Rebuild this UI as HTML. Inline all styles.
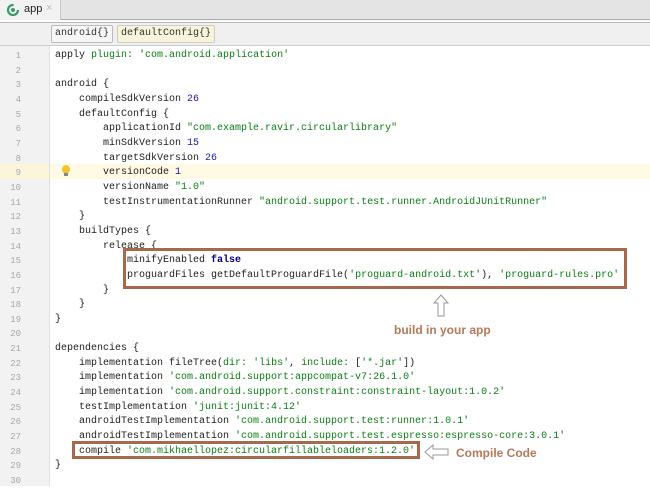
<!DOCTYPE html>
<html><head><style>
body{margin:0;width:650px;height:486px;overflow:hidden;background:#fff;font-family:"Liberation Mono",monospace;position:relative}
.tabbar{position:absolute;left:0;top:0;width:650px;height:19px;background:#e4e4e4;border-bottom:1px solid #aaa}
.tab{position:absolute;left:0;top:0;width:60px;height:20px;background:#f2f2f2;border-right:1px solid #ccc;font-family:"Liberation Sans",sans-serif;font-size:11px;color:#222}
.crumbs{position:absolute;left:0;top:22px;width:650px;height:22px;background:#f0f0f0;border-top:1px solid #bbb;border-bottom:1px solid #ccc}
.crumb{position:absolute;top:2px;height:16px;border:1px solid #bbb;border-radius:2px;font-size:10px;line-height:16px;padding:0 3px;color:#333;background:#f6f6f6}
.gutter{position:absolute;left:0;top:46px;width:49px;height:440px;background:#f2f2f2;border-right:1px solid #e0e0e0}
.hl{position:absolute;left:50px;top:164px;width:600px;height:14.6px;background:#fffae3}
.hlg{position:absolute;left:0;top:164px;width:49px;height:14.6px;background:#fbf5dc}
.nums{position:absolute;left:0;top:49px;width:21px;text-align:right;font-size:9px;line-height:14.65px;color:#a8a8a8}
pre{position:absolute;left:55px;top:49px;margin:0;font-family:"Liberation Mono",monospace;font-size:10px;line-height:14.65px;color:#222}
.s{color:#0a7f14}.n{color:#1a1aa6}.k{color:#000080;font-weight:bold}
.box{position:absolute;border:3px solid #a6694d}
.lbl{position:absolute;font-family:"Liberation Sans",sans-serif;font-weight:bold;font-size:12px;color:#b8785a}
</style></head><body>
<div class="tabbar"></div>
<div class="tab"><svg width="14" height="14" style="position:absolute;left:6px;top:3px"><circle cx="7" cy="7" r="5" fill="none" stroke="#3d9a6a" stroke-width="2.2" stroke-dasharray="24 8"/><circle cx="7" cy="7" r="2" fill="#3d9a6a"/></svg><span style="position:absolute;left:24px;top:3px">app</span><span style="position:absolute;left:46px;top:2px;color:#bbb">×</span></div>
<div class="crumbs">
<div class="crumb" style="left:51px">android{}</div>
<div class="crumb" style="left:117px;background:#f8f4dc;border-color:#ccc">defaultConfig{}</div>
</div>
<div class="gutter"></div>
<div class="hlg"></div><div class="hl"></div>
<div style="position:absolute;left:62px;top:165px;width:8px;height:9px;border-radius:50%;background:#f2c230"></div>
<div style="position:absolute;left:64px;top:173px;width:4px;height:3px;background:#888"></div>
<div class="nums">1<br>2<br>3<br>4<br>5<br>6<br>7<br>8<br>9<br>10<br>11<br>12<br>13<br>14<br>15<br>16<br>17<br>18<br>19<br>20<br>21<br>22<br>23<br>24<br>25<br>26<br>27<br>28<br>29<br>30</div>
<pre>apply <span class="s">plugin:</span> <span class="s">'com.android.application'</span>

android {
    compileSdkVersion <span class="n">26</span>
    defaultConfig {
        applicationId <span class="s">"com.example.ravir.circularlibrary"</span>
        minSdkVersion <span class="n">15</span>
        targetSdkVersion <span class="n">26</span>
        versionCode <span class="n">1</span>
        versionName <span class="s">"1.0"</span>
        testInstrumentationRunner <span class="s">"android.support.test.runner.AndroidJUnitRunner"</span>
    }
    buildTypes {
        release {
            minifyEnabled <span class="k">false</span>
            proguardFiles getDefaultProguardFile(<span class="s">'proguard-android.txt'</span>), <span class="s">'proguard-rules.pro'</span>
        }
    }
}

dependencies {
    implementation fileTree(<span class="s">dir:</span> <span class="s">'libs'</span>, <span class="s">include:</span> [<span class="s">'*.jar'</span>])
    implementation <span class="s">'com.android.support:appcompat-v7:26.1.0'</span>
    implementation <span class="s">'com.android.support.constraint:constraint-layout:1.0.2'</span>
    testImplementation <span class="s">'junit:junit:4.12'</span>
    androidTestImplementation <span class="s">'com.android.support.test:runner:1.0.1'</span>
    androidTestImplementation <span class="s">'com.android.support.test.espresso:espresso-core:3.0.1'</span>
    compile <span class="s">'com.mikhaellopez:circularfillableloaders:1.2.0'</span>
}</pre>
<div class="box" style="left:123px;top:248px;width:498px;height:35px"></div>
<div class="box" style="left:72px;top:441px;width:342px;height:12px"></div>
<svg style="position:absolute;left:432px;top:294px" width="18" height="24"><path d="M9 1 L16 9 L12 9 L12 22 L6 22 L6 9 L2 9 Z" fill="#fff" stroke="#999" stroke-width="1"/></svg>
<svg style="position:absolute;left:424px;top:444px" width="26" height="16"><path d="M1 8 L9 1 L9 5 L24 5 L24 11 L9 11 L9 15 Z" fill="#fff" stroke="#999" stroke-width="1"/></svg>
<div class="lbl" style="left:394px;top:323px">build in your app</div>
<div class="lbl" style="left:456px;top:446px">Compile Code</div>
</body></html>
